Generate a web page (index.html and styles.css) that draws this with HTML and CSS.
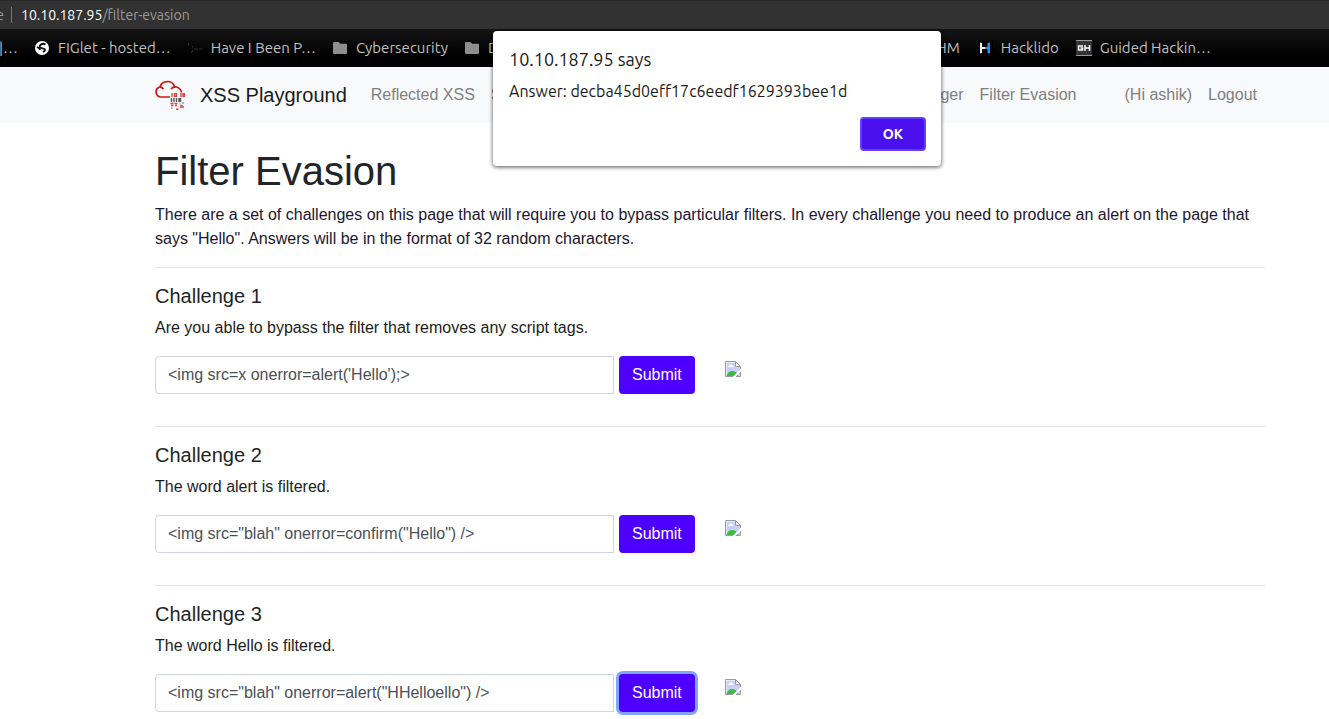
FILE: index.html
```html
<!DOCTYPE html>
<html lang="en">
<head>
<meta charset="utf-8">
<title>XSS Playground</title>
<link rel="stylesheet" href="styles.css">
</head>
<body>
<svg class="defs" width="0" height="0" aria-hidden="true">
  <symbol id="folder" viewBox="0 0 16 12"><path fill="#8e8e8e" d="M2 0h4.600l1.600 1.800H14q1 0 1 1V11q0 1-1 1H2q-1 0-1-1V1q0-1 1-1z"/></symbol>
  <symbol id="broken" viewBox="0 0 16 16">
    <path fill="#fff" d="M0 0h11l5 5v11H0z"/>
    <path fill="#c6d0fa" d="M1.500 1.500H10V6h5v9H1.500z"/>
    <path fill="#fff" d="M3 6q0-1.500 1.500-1.500Q5 3 6.500 3.500 8 3.500 8 5q1 0 1 1z"/>
    <path fill="#3dbb3d" d="M1.500 15q1.500-5 5.500-5 4.500 0 6.500 5z"/>
    <path fill="#fff" d="M16 8v2.500L10.500 16H7.500z"/>
    <path fill="none" stroke="#9a9a9a" d="M8 15.500H.5V.5h10l5 5V8M10.500.5v5h5M15.500 11v4.500H11"/>
  </symbol>
</svg>
<header class="browser">
  <div class="address"><span>e</span><span class="divider"></span><span><span class="host">10.10.187.95</span>/filter-evasion</span></div>
  <nav class="bookmarks" aria-label="Bookmarks">
    <a href="#" class="cut">|…</a>
    <a href="#"><svg width="16" height="14" viewBox="-1 0 16 14"><circle cx="7" cy="7" r="7" fill="#fff"/><path fill="none" stroke="#111" stroke-width="1.800" d="M10.500 3.500Q8 2 6 3.500T5 6.500L9.500 8Q11 9.500 8 11M2 6l2.500 1.500L5 9"/></svg>FIGlet - hosted…</a>
    <a href="#"><svg width="16" height="14" viewBox="0 0 16 14" fill="none" stroke="#333"><path d="M1.500 2v2.500M5.500 5v1.500M5.500 9v1l-1.500 2M7.500 8h3.500M12 8h3.500"/></svg>Have I Been P…</a>
    <a href="#"><svg width="16" height="12"><use href="#folder"/></svg>Cybersecurity</a>
    <a href="#"><svg width="16" height="12"><use href="#folder"/></svg>Dev</a>
    <span class="bookmarks-end">
      <a href="#">THM</a>
      <a href="#"><svg width="16" height="16" viewBox="0 0 16 16"><path fill="#000" d="M0 0h16v16H0z"/><path fill="#eee" d="M3 2.500l2 .5v4h3v2H5v4l-2 .5z"/><path fill="#2196f3" d="M8 7h2.500V3l2.500-.5v11l-2.500-.5V9H8z"/></svg>Hacklido</a>
      <a href="#"><svg width="16" height="16" viewBox="0 0 16 16"><path fill="#333" d="M0 0h16v16H0z"/><path stroke="#999" d="M0 .5h16M0 15.500h16"/><path fill="none" stroke="#fff" stroke-width="1.500" d="M7 6H2.500v4h4V8H4.500M9 5v6M9 8h4.500M13.500 5v6"/></svg>Guided Hackin…</a>
    </span>
  </nav>
</header>
<nav class="navbar" aria-label="Main">
  <a class="brand" href="#">
    <svg width="30" height="30" viewBox="0 0 30 30" fill="none">
      <path stroke="#c8181c" stroke-width="1.700" d="M15 17H5.500A5.200 5.200 0 0 1 4 7.200Q6.500 6.500 8.500 9M5 7A7.500 7 0 0 1 19.500 6.500M16 9Q18 6.500 21.500 7 26 8.500 26.500 12.500"/>
      <g stroke-width="1.400">
        <path stroke="#d44" d="M17 13v4M19.500 13.700h2v2.600h-2zM26 13v4M28 13.700h1.500v2.600H28zM15.500 23.500h3M16 25.500h2.500M19.500 23.500h3M20 25.500h2M25 27h4M25.500 25.500h2M21 29.300h2.500"/>
        <path stroke="#555" d="M16.500 18v4M19 18v4M21.500 18v4M24 18.700h1.500v2.600H24z"/>
        <path stroke="#999" d="M16 28h1.500M24.500 24h1M27 23h2"/>
      </g>
    </svg>XSS Playground</a>
  <a href="#">Reflected XSS</a>
  <a href="#">Stored XSS</a>
  <a href="#">DOM-Based XSS</a>
  <div class="nav-end"><a href="#">Key Logger</a><a href="#">Filter Evasion</a></div>
  <div class="account"><a href="#">(Hi ashik)</a><a href="#">Logout</a></div>
</nav>
<main>
  <h1>Filter Evasion</h1>
  <p>There are a set of challenges on this page that will require you to bypass particular filters. In every challenge you need to produce an alert on the page that says "Hello". Answers will be in the format of 32 random characters.</p>
  <section>
    <h2>Challenge 1</h2>
    <label for="c1">Are you able to bypass the filter that removes any script tags.</label>
    <div class="row">
      <form><input id="c1" type="text" value="&lt;img src=x onerror=alert('Hello');&gt;"><button type="button">Submit</button></form>
      <div class="result"><svg width="16" height="16"><use href="#broken"/></svg></div>
    </div>
  </section>
  <section>
    <h2>Challenge 2</h2>
    <label for="c2">The word alert is filtered.</label>
    <div class="row">
      <form><input id="c2" type="text" value="&lt;img src=&quot;blah&quot; onerror=confirm(&quot;Hello&quot;) /&gt;"><button type="button">Submit</button></form>
      <div class="result"><svg width="16" height="16"><use href="#broken"/></svg></div>
    </div>
  </section>
  <section>
    <h2>Challenge 3</h2>
    <label for="c3">The word Hello is filtered.</label>
    <div class="row">
      <form><input id="c3" type="text" value="&lt;img src=&quot;blah&quot; onerror=alert(&quot;HHelloello&quot;) /&gt;"><button type="button" class="focused">Submit</button></form>
      <div class="result"><svg width="16" height="16"><use href="#broken"/></svg></div>
    </div>
  </section>
</main>
<div class="dialog" role="alertdialog" aria-labelledby="dialog-title">
  <div class="dialog-title" id="dialog-title">10.10.187.95 says</div>
  <div class="dialog-text">Answer: decba45d0eff17c6eedf1629393bee1d</div>
  <button type="button" class="ok">OK</button>
</div>
</body>
</html>
```
FILE: styles.css
```css
* { box-sizing: border-box; }
body { margin: 0; min-height: 100vh; background: #fff; color: #212529; font: 16px/24px "Liberation Sans", Arial, sans-serif; }
a { color: inherit; text-decoration: none; white-space: nowrap; }
svg { display: block; flex: none; }
.defs { position: absolute; }
.browser { font-family: Ubuntu, "Noto Sans", sans-serif; font-size: 14px; }
.address { display: flex; align-items: center; height: 29px; background: #323232; border-top: 1px solid #282828; color: #9a9a9a; }
.address .divider { width: 1px; height: 16px; margin: 0 9px 0 7px; background: #777; }
.address > span:first-child { width: 4px; display: flex; justify-content: flex-end; }
.host { color: #fff; }
.bookmarks { display: flex; align-items: center; gap: 16px; height: 38px; padding-right: 118px; overflow: hidden; background: linear-gradient(#141414, #000 70%); color: #c0c0c0; font-size: 15px; }
.bookmarks a { display: flex; align-items: center; gap: 8px; }
.bookmarks .cut { width: 18px; justify-content: flex-end; }
.bookmarks-end { display: flex; gap: 17px; margin-left: auto; }
.navbar { display: flex; align-items: center; height: 56px; padding: 0 64px 0 155px; background: #f8f9fa; color: #808080; }
.navbar a { padding: 0 8px; }
.navbar .brand { display: flex; align-items: center; gap: 15px; padding: 0; margin-right: 16px; color: #1b1b1b; font-size: 20px; }
.nav-end { display: flex; margin-left: auto; }
.account { display: flex; margin-left: 32px; }
main { padding: 24px 64px 4px 155px; }
h1 { margin: 0 0 8px; font-size: 40px; line-height: 48px; font-weight: 400; }
p { margin: 0 0 16px; color: #1c1630; }
section { border-top: 1px solid #e5e5e5; padding: 16px 0 32px; }
section:last-child { padding-bottom: 0; }
h2 { margin: 0 0 8px; font-size: 20px; line-height: 24px; font-weight: 400; }
label { display: block; margin-bottom: 16px; color: #1c1c1c; }
.row { display: grid; grid-template-columns: 1fr 1fr; gap: 30px; }
form { display: flex; gap: 5px; }
input { width: 85%; height: 38px; padding: 0 12px; border: 1px solid #ced4da; border-radius: 4px 0 0 4px; background: #fff; color: #495057; font: inherit; }
button { border: 0; border-radius: 4px; padding: 0 13px; height: 38px; background: #4d00ff; color: #fff; font: inherit; }
.focused { box-shadow: 0 0 0 3px #80a5ff; }
.result { padding-top: 5px; }
.dialog { position: absolute; top: 31px; left: 493px; width: 448px; padding: 15px 15px 15px 16px; display: flex; flex-direction: column; background: #fff; border-radius: 4px; box-shadow: 0 1px 4px rgba(0,0,0,.7); color: #1b1b1b; font-family: Ubuntu, "Noto Sans", sans-serif; }
.dialog-title { font-size: 18px; line-height: 26px; }
.dialog-text { font-size: 16px; line-height: 24px; margin: 7px 0 14px; }
.ok { align-self: flex-end; width: 66px; height: 34px; border: 2px solid #613fff; background: #4b10ee; font-size: 14px; font-weight: 700; }
```
